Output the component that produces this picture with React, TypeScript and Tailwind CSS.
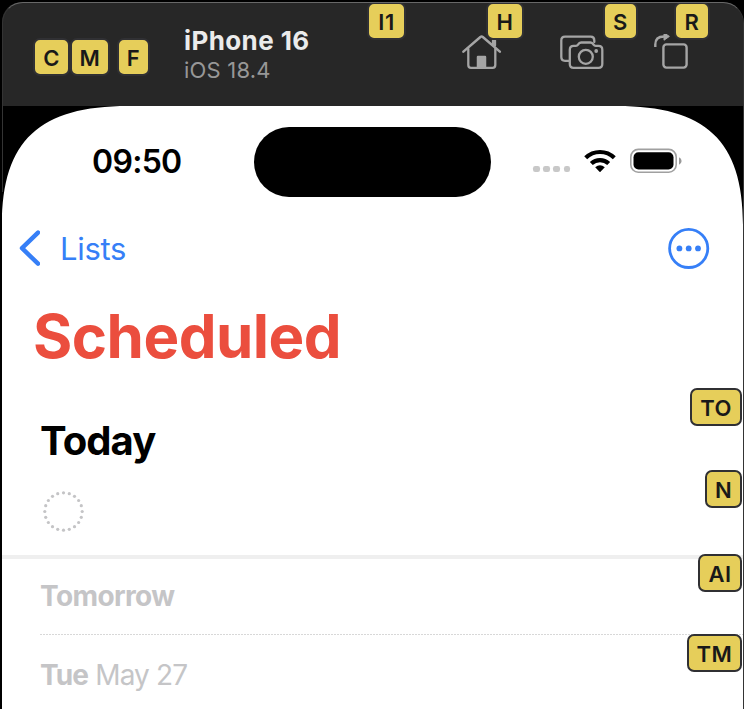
import React from 'react';

function Badge({ label, className = '' }: { label: string; className?: string }) {
  return (
    <span
      className={`flex h-[38px] shrink-0 items-center justify-center rounded-[7px] border-2 border-[#303033] bg-[#e6ce5a] pt-0.5 text-[22px] font-semibold leading-none tracking-[0.5px] text-[#191919] ${className}`}
    >
      {label}
    </span>
  );
}

function HomeIcon() {
  return (
    <svg width="40" height="38" viewBox="0 0 40 38" fill="none" stroke="#a5a5a5" strokeWidth="2.3" strokeLinecap="round" strokeLinejoin="round">
      <path d="M1.4 20.6 L18.4 6 Q19.6 5.1 20.8 6 L37.8 20.6" strokeWidth="2.5" />
      <path d="M6.3 18 V34 Q6.3 36.8 9 36.8 H30.6 Q33.3 36.8 33.3 34 V18" />
      <path d="M31 9.5 H33 V14.5 L31 13 Z" fill="#a5a5a5" />
      <path d="M15.9 36.5 V26 H23.1 V36.5 Z" fill="#a5a5a5" />
    </svg>
  );
}

function ScreenshotIcon() {
  return (
    <svg width="44" height="38" viewBox="0 0 44 38" fill="none" stroke="#a5a5a5" strokeWidth="2.3" strokeLinecap="round" strokeLinejoin="round">
      <path d="M9 29.8 H5 Q1.3 29.8 1.3 26.1 V9.4 Q1.3 5.7 5 5.7 H30.8 Q34.3 5.7 34.3 9.4 V11" />
      <path d="M9.8 18.7 Q9.8 14.9 13.6 14.9 H16 Q17.2 14.9 18 13.7 L18.9 12.6 Q19.8 11.5 21.2 11.5 H30.4 Q31.8 11.5 32.7 12.6 L33.6 13.7 Q34.4 14.9 35.6 14.9 H38.5 Q42.3 14.9 42.3 18.7 V33 Q42.3 36.8 38.5 36.8 H13.6 Q9.8 36.8 9.8 33 Z" />
      <circle cx="25.8" cy="25.8" r="7" />
      <circle cx="36.2" cy="20" r="1.9" fill="#a5a5a5" stroke="none" />
    </svg>
  );
}

function RotateIcon() {
  return (
    <svg width="34" height="38" viewBox="0 0 34 38" fill="none" stroke="#a5a5a5" strokeWidth="2.4" className="-ml-px">
      <path d="M1.3 13 V10.5 Q1.3 2.5 10 2.5" />
      <path d="M10 -1.2 L15.4 2.4 L10 6.2 Z" fill="#a5a5a5" strokeWidth="1" strokeLinejoin="round" />
      <rect x="9.4" y="10.4" width="23.2" height="23.2" rx="3" />
    </svg>
  );
}

function ToolbarHeader() {
  return (
    <header className="relative flex h-[104px] shrink-0 bg-[#272727]">
      <div className="flex pl-[31px] pt-9">
        <Badge label="C" className="w-[37px]" />
        <Badge label="M" className="w-10" />
        <Badge label="F" className="ml-[7px] w-[33px]" />
      </div>
      <div className="ml-[34px] pt-[23px]">
        <div className="h-[31px] whitespace-nowrap text-[26px] font-bold leading-8 tracking-[0.4px] text-[#ebebeb]">iPhone 16</div>
        <div className="h-7 whitespace-nowrap text-[22px] leading-7 tracking-[0.2px] text-[#979797]">iOS 18.4</div>
      </div>
      <div className="ml-auto flex pr-[55px] pt-8">
        <div className="-mt-1 mr-[58px] pt-px"><HomeIcon /></div>
        <div className="-mt-1 mr-[51px] pt-px"><ScreenshotIcon /></div>
        <RotateIcon />
      </div>
      <Badge label="I1" className="absolute left-[365px] top-0 w-[39px]" />
      <Badge label="H" className="absolute left-[484px] top-0 w-[38px]" />
      <Badge label="S" className="absolute left-[601px] top-0 w-[35px]" />
      <Badge label="R" className="absolute left-[672px] top-0 w-9" />
    </header>
  );
}

function Corner({ className }: { className: string }) {
  return (
    <svg width="126" height="119" viewBox="0 0 126 119" className={`absolute top-0 ${className}`}>
      <path d="M0 0 H126 C38 0 0 34 0 119 Z" fill="#000" />
    </svg>
  );
}

function StatusBar() {
  return (
    <div className="flex h-[111px] shrink-0 items-center pt-px">
      <div className="w-[252px] pl-[90px] text-[32px] font-semibold tracking-[-0.7px] text-black">09:50</div>
      <div className="mb-px h-[70px] w-[237px] rounded-full bg-black" />
      <div className="ml-[42px] mt-3.5 flex gap-[3.6px]">
        <i className="size-[6.6px] rounded-[2.2px] bg-[#c8c8c8]" />
        <i className="size-[6.6px] rounded-[2.2px] bg-[#c8c8c8]" />
        <i className="size-[6.6px] rounded-[2.2px] bg-[#c8c8c8]" />
        <i className="size-[6.6px] rounded-[2.2px] bg-[#c8c8c8]" />
      </div>
      <svg width="32" height="24" viewBox="0 0 32 24" className="mb-0.5 ml-[13.8px]" fill="none" stroke="#000" strokeWidth="4.2">
        <path d="M1.7 8.8 A20.5 20.5 0 0 1 30.3 8.8" />
        <path d="M7.3 14.6 A12.5 12.5 0 0 1 24.7 14.6" />
        <path d="M11.2 18.3 Q16 14.2 20.8 18.3 L16.5 22.7 Q16 23.2 15.5 22.7 Z" fill="#000" stroke="none" />
      </svg>
      <svg width="52" height="26" viewBox="0 0 52 26" className="mb-0.5 ml-[14px]">
        <rect x="0.8" y="1.4" width="45.4" height="22.8" rx="7.5" fill="none" stroke="#a0a0a0" strokeWidth="1.6" />
        <rect x="3.5" y="4.3" width="40" height="17.2" rx="5" fill="#000" />
        <path d="M49 9.3 Q51.6 10.5 51.6 13 Q51.6 15.5 49 16.7 Z" fill="#999" />
      </svg>
    </div>
  );
}

function NavBar() {
  return (
    <nav className="flex h-16 shrink-0 items-center text-[#367ff7]">
      <svg width="22" height="38" viewBox="0 0 22 38" className="mb-0.5 ml-4" fill="none" stroke="currentColor" strokeWidth="4.4" strokeLinecap="round" strokeLinejoin="round">
        <path d="M20 3.6 L4 19.2 L20 34.7" />
      </svg>
      <span className="ml-5 text-[31px] tracking-[-0.3px]">Lists</span>
      <svg width="42" height="42" viewBox="0 0 42 42" className="mb-0.5 ml-auto mr-[33px]" fill="currentColor">
        <circle cx="20.7" cy="21.4" r="19.1" fill="none" stroke="currentColor" strokeWidth="2.8" />
        <circle cx="11.4" cy="21.4" r="2.9" />
        <circle cx="20.7" cy="21.4" r="2.9" />
        <circle cx="30" cy="21.4" r="2.9" />
      </svg>
    </nav>
  );
}

export default function App() {
  const dots = Array.from({ length: 20 }, (_, i) => (i * Math.PI) / 10);
  return (
    <div className="relative h-[709px] w-[744px] overflow-hidden bg-black pl-0.5 pr-px pt-0.5 font-['Inter','Liberation_Sans',sans-serif]">
      <div className="flex h-[707px] flex-col overflow-hidden rounded-t-[20px]">
        <ToolbarHeader />
        <main className="relative flex h-[603px] shrink-0 flex-col overflow-hidden bg-white">
          <Corner className="left-0" />
          <Corner className="right-0 -scale-x-100" />
          <StatusBar />
          <NavBar />
          <h1 className="h-28 shrink-0 pl-[31px] text-[60px] font-bold leading-[111px] tracking-[-0.5px] text-[#eb4e3e]">Scheduled</h1>
          <h2 className="h-[95px] shrink-0 pl-[38px] text-[40px] font-bold leading-[95px] tracking-[-0.9px] text-black">Today</h2>
          <div className="h-[67px] shrink-0 pl-10 pt-0.5">
            <svg width="43" height="43" viewBox="-21.5 -21.5 43 43">
              {dots.map((a) => (
                <circle key={a} cx={18.7 * Math.cos(a)} cy={18.7 * Math.sin(a)} r="1.6" fill="#c4c4c6" />
              ))}
            </svg>
          </div>
          <div className="h-1 shrink-0 bg-[#efefef]" />
          <div className="h-[75px] shrink-0 pl-[38px] text-[28px] font-bold leading-[74px] tracking-[-0.6px] text-[#c5c5c7]">Tomorrow</div>
          <div className="ml-[38px] h-px shrink-0 bg-[repeating-linear-gradient(90deg,#d8d8d8_0px,#d8d8d8_2px,#fff_2px,#fff_3px)]" />
          <div className="h-[78px] shrink-0 pl-[38px] text-[28px] leading-[80px] tracking-[-0.85px] text-[#c5c5c7]">
            <span className="font-bold">Tue</span> May 27
          </div>
        </main>
      </div>
      <div className="pointer-events-none absolute left-0.5 right-0 top-0.5 h-[190px] rounded-t-[21px] border border-b-0 border-l-[#343434] border-r-[#343434] border-t-[#686868]" />
      <div className="pointer-events-none absolute bottom-0 right-0 top-[192px] w-px bg-[#343434]" />
      <Badge label="TO" className="absolute left-[690px] top-[388px] w-[52px]" />
      <Badge label="N" className="absolute left-[705px] top-[470px] w-[37px]" />
      <Badge label="AI" className="absolute left-[698px] top-[554px] w-11" />
      <Badge label="TM" className="absolute left-[687px] top-[634px] w-[55px]" />
    </div>
  );
}
